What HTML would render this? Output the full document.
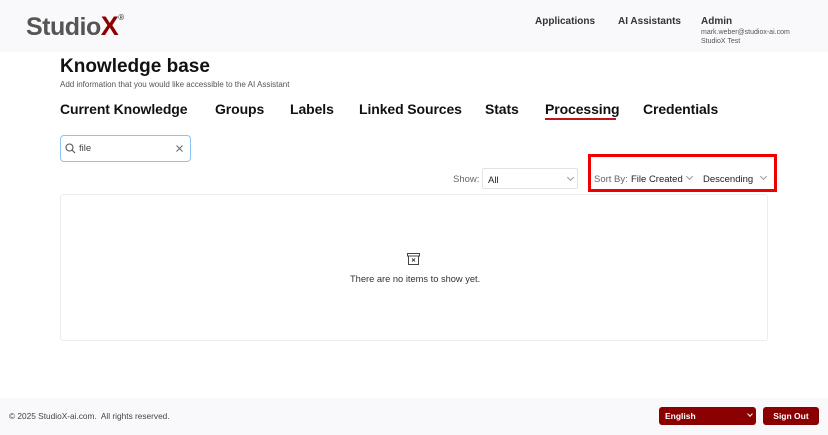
<!DOCTYPE html>
<html><head><style>
*{margin:0;padding:0;box-sizing:border-box}
body{width:828px;height:435px;position:relative;background:#fff;font-family:"Liberation Sans",sans-serif;color:#111;overflow:hidden}
.abs{position:absolute;white-space:nowrap}
.hdr{position:absolute;left:0;top:0;width:828px;height:52px;background:#f9f9fb}
.ftr{position:absolute;left:0;top:398px;width:828px;height:37px;background:#f9f9fb}
.tab{position:absolute;top:101px;font-size:14px;letter-spacing:-0.1px;font-weight:bold;color:#111}
.sel{position:absolute;font-size:9.5px;color:#222}
.chev{position:absolute;width:5px;height:5px;border-right:1px solid #999;border-bottom:1px solid #999;transform:rotate(45deg)}
</style></head><body>
<div class="hdr"></div>
<div class="abs" style="left:26px;top:11px;font-size:25px;font-weight:bold;color:#555;letter-spacing:-0.5px">Studio<span style="color:#8b0000;font-size:27px">X</span><sup style="font-size:8px;color:#555;position:relative;top:-6px">®</sup></div>
<div class="abs" style="left:535px;top:16px;font-size:10px;font-weight:bold;color:#333">Applications</div>
<div class="abs" style="left:618px;top:16px;font-size:10px;font-weight:bold;color:#333">AI Assistants</div>
<div class="abs" style="left:701px;top:16px;font-size:10px;font-weight:bold;color:#333">Admin</div>
<div class="abs" style="left:701px;top:29px;font-size:7px;color:#555">mark.weber@studiox-ai.com</div>
<div class="abs" style="left:701px;top:38px;font-size:7px;color:#555">StudioX Test</div>

<div class="abs" style="left:60px;top:56px;font-size:19px;font-weight:bold">Knowledge base</div>
<div class="abs" style="left:60px;top:80px;font-size:8px;color:#555">Add information that you would like accessible to the AI Assistant</div>

<div class="tab" style="left:60px">Current Knowledge</div>
<div class="tab" style="left:215px">Groups</div>
<div class="tab" style="left:290px">Labels</div>
<div class="tab" style="left:359px">Linked Sources</div>
<div class="tab" style="left:485px">Stats</div>
<div class="tab" style="left:545px">Processing</div>
<div class="abs" style="left:545px;top:118px;width:71px;height:1.5px;background:#c0141c"></div>
<div class="tab" style="left:643px">Credentials</div>

<div class="abs" style="left:60px;top:135px;width:131px;height:27px;border:1px solid #8cc4f5;border-radius:4px"></div>
<svg class="abs" style="left:65px;top:143px" width="11" height="11" viewBox="0 0 11 11"><circle cx="4.5" cy="4.5" r="3.5" fill="none" stroke="#555" stroke-width="1.1"/><path d="M7 7l3 3" stroke="#555" stroke-width="1.1"/></svg>
<div class="abs" style="left:79px;top:143px;font-size:9.5px;color:#444">file</div>
<svg class="abs" style="left:176px;top:145px" width="7" height="7"><path d="M0.5 0.5l6 6M6.5 0.5l-6 6" stroke="#666" stroke-width="1"/></svg>

<div class="abs" style="left:453px;top:174px;font-size:9.5px;color:#666">Show:</div>
<div class="abs" style="left:482px;top:168px;width:96px;height:21px;border:1px solid #e3e3e3;border-radius:2px"></div>
<div class="sel" style="left:488px;top:175px">All</div>
<div class="chev" style="left:568px;top:175px"></div>

<div class="abs" style="left:588px;top:154px;width:189px;height:38px;border:3px solid #ee0000"></div>
<div class="abs" style="left:594px;top:174px;font-size:9.5px;color:#666">Sort By:</div>
<div class="sel" style="left:631px;top:174px">File Created</div>
<div class="chev" style="left:687px;top:174px"></div>
<div class="sel" style="left:703px;top:174px">Descending</div>
<div class="chev" style="left:761px;top:174px"></div>

<div class="abs" style="left:60px;top:194px;width:708px;height:147px;border:1px solid #ececec;border-radius:3px"></div>
<svg class="abs" style="left:407px;top:253px" width="13" height="12" viewBox="0 0 13 12"><rect x="0.5" y="0.5" width="12" height="2.5" fill="none" stroke="#444"/><path d="M1.5 3v8.5h10V3" fill="none" stroke="#444"/><path d="M5 5.5l3 3M8 5.5l-3 3" stroke="#444"/></svg>
<div class="abs" style="left:350px;top:274px;font-size:9.3px;color:#333">There are no items to show yet.</div>

<div class="ftr"></div>
<div class="abs" style="left:9px;top:411px;font-size:8.3px;color:#444">© 2025 StudioX-ai.com.&nbsp; All rights reserved.</div>
<div class="abs" style="left:659px;top:407px;width:97px;height:18px;background:#8b0000;border-radius:3px"></div>
<div class="abs" style="left:665px;top:411px;font-size:8.5px;font-weight:bold;color:#fff">English</div>
<div class="abs" style="left:748px;top:412px;width:4px;height:4px;border-right:1px solid #fff;border-bottom:1px solid #fff;transform:rotate(45deg)"></div>
<div class="abs" style="left:763px;top:407px;width:56px;height:18px;background:#8b0000;border-radius:3px;color:#fff;font-size:8.5px;font-weight:bold;text-align:center;line-height:18px">Sign Out</div>
</body></html>
